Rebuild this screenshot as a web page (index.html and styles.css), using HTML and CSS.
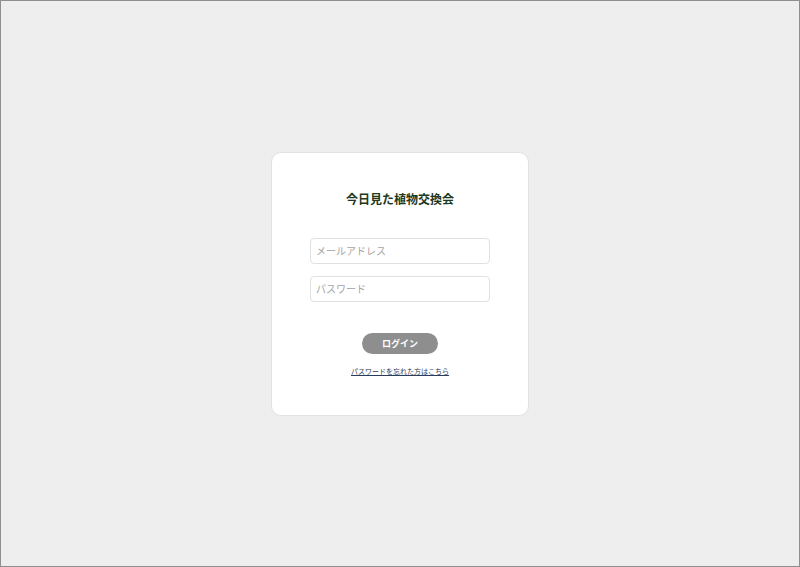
FILE: index.html
```html
<!DOCTYPE html>
<html lang="ja">
<head>
  <meta charset="UTF-8">
  <meta name="viewport" content="width=device-width, initial-scale=1.0">
  <title>ログイン | 今日見た植物交換会</title>
  <link rel="stylesheet" href="styles.css">
</head>
<body>
  <div class="page">
    <form class="login-card" onsubmit="return false;">
      <h1 class="login-title">今日見た植物交換会</h1>

      <div class="fields">
        <input class="text-input" type="email" placeholder="メールアドレス">
        <input class="text-input" type="password" placeholder="パスワード">
      </div>

      <button class="login-button" type="submit">ログイン</button>

      <a class="forgot-link" href="#">パスワードを忘れた方はこちら</a>
    </form>
  </div>
</body>
</html>
```

FILE: styles.css
```css
:root {
  --bg-color: #eeeeee;
  --frame-color: #8f8f8f;
  --card-border: #e2e2e2;
  --title-color: #1d3a1e;
  --input-border: #e0e0e0;
  --placeholder-color: #a3a3a3;
  --button-color: #8e8e8e;
  --link-color: #2c3b5c;
}

* {
  box-sizing: border-box;
}

body {
  margin: 0;
  padding: 0;
  background-color: var(--bg-color);
  font-family: "Noto Sans CJK JP", "Noto Sans", sans-serif;
}

.page {
  height: 100vh;
  border: 1px solid var(--frame-color);
  display: flex;
  justify-content: center;
  align-items: center;
}

.login-card {
  width: 258px;
  padding: 37px 38px 39px;
  background-color: #fff;
  border: 1px solid var(--card-border);
  border-radius: 10px;
  display: flex;
  flex-direction: column;
  align-items: center;
}

.login-title {
  margin: 0;
  font-size: 12px;
  line-height: 17px;
  font-weight: bold;
  color: var(--title-color);
}

.fields {
  width: 100%;
  margin-top: 31px;
  display: flex;
  flex-direction: column;
  gap: 12px;
}

.text-input {
  width: 100%;
  height: 26px;
  padding: 0 5px;
  border: 1px solid var(--input-border);
  border-radius: 4px;
  font-family: inherit;
  font-size: 10px;
  color: #333;
  outline: none;
}

.text-input::placeholder {
  color: var(--placeholder-color);
}

.login-button {
  margin-top: 31px;
  width: 76px;
  height: 21px;
  border: none;
  border-radius: 11px;
  background-color: var(--button-color);
  color: #fff;
  font-family: inherit;
  font-size: 9px;
  font-weight: bold;
  cursor: pointer;
}

.forgot-link {
  margin-top: 12px;
  font-size: 7px;
  line-height: 10px;
  color: var(--link-color);
  text-decoration: underline;
}
```
